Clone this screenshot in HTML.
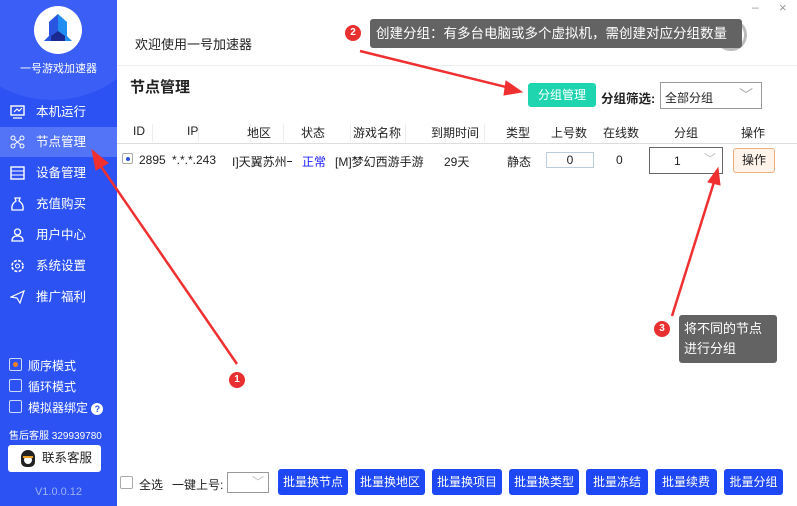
<!DOCTYPE html>
<html><head><meta charset="utf-8"><style>
*{margin:0;padding:0;box-sizing:border-box}
body{width:797px;height:506px;overflow:hidden;background:#fff;font-family:"Liberation Sans","Noto Sans CJK SC",sans-serif;font-size:12px;color:#222;position:relative}
.sb{position:absolute;left:0;top:0;width:117px;height:506px;background:#2c52f4;color:#fff;overflow:hidden}
.circ{position:absolute;left:-45px;top:-70px;width:195px;height:170px;border-radius:50%;background:#3a5ef6}
.logo{position:absolute;left:34px;top:6px;width:48px;height:48px;border-radius:50%;background:#fff}
.nav{position:absolute;left:0;width:117px;height:30px;line-height:30px;font-size:12.5px;padding-left:36px}
.nav.on{background:#5374f7}
.ic{position:absolute;left:10px;top:8px;width:15px;height:14px}
.abs{position:absolute}
.btn{position:absolute;top:469px;height:26px;background:#1e48f5;color:#fff;border-radius:3px;font-size:12px;line-height:26px;text-align:center}
.badge{position:absolute;width:16px;height:16px;border-radius:50%;background:#e83030;color:#fff;font-size:10px;line-height:16px;text-align:center;font-weight:bold}
.tip{position:absolute;background:#636363;color:#fff;border-radius:3px}
.vl{position:absolute;top:124px;width:1px;height:18px;background:#eee}
</style></head><body>
<div class="sb">
<div class="circ"></div>
<div class="logo"><svg width="48" height="48"><path d="M24 8 L33 16 L33 30 L38 35 L10 35 L15 30 L15 16 Z" fill="#1f8ef0"/><path d="M15 16 L24 8 L24 35 L10 35 L15 30Z" fill="#2a55e0"/><path d="M17 30 L24 25 L31 30 L31 35 L17 35Z" fill="#1a2a90"/></svg></div>
<div class="abs" style="left:0;top:60px;width:117px;text-align:center;font-size:11px">一号游戏加速器</div>
<div class="nav" style="top:97px"><svg class="ic" viewBox="0 0 15 14"><rect x="1" y="1" width="13" height="9" fill="none" stroke="#fff" stroke-width="1.4"/><path d="M3 13h9M4 7l3-3 2 2 3-3" stroke="#fff" fill="none" stroke-width="1.2"/></svg>本机运行</div>
<div class="nav on" style="top:127px"><svg class="ic" viewBox="0 0 15 14"><circle cx="3" cy="3" r="2" fill="none" stroke="#fff"/><circle cx="12" cy="3" r="2" fill="none" stroke="#fff"/><circle cx="3" cy="11" r="2" fill="none" stroke="#fff"/><circle cx="12" cy="11" r="2" fill="none" stroke="#fff"/><path d="M4.5 4.5l6 5M10.5 4.5l-6 5" stroke="#fff"/></svg>节点管理</div>
<div class="nav" style="top:158px"><svg class="ic" viewBox="0 0 15 14"><rect x="1" y="1" width="13" height="12" fill="none" stroke="#fff" stroke-width="1.4"/><path d="M1 5h13M1 9h13" stroke="#fff"/></svg>设备管理</div>
<div class="nav" style="top:189px"><svg class="ic" viewBox="0 0 15 14"><path d="M5 1h5l-1 3q5 3 4 9H2q-1-6 4-9z" fill="none" stroke="#fff" stroke-width="1.3"/></svg>充值购买</div>
<div class="nav" style="top:220px"><svg class="ic" viewBox="0 0 15 14"><circle cx="7.5" cy="4" r="3" fill="none" stroke="#fff" stroke-width="1.3"/><path d="M2 13q0-5 5.5-5t5.5 5z" fill="none" stroke="#fff" stroke-width="1.3"/></svg>用户中心</div>
<div class="nav" style="top:251px"><svg class="ic" viewBox="0 0 15 14"><circle cx="7.5" cy="7" r="5.5" fill="none" stroke="#fff" stroke-width="1.6" stroke-dasharray="3 1.4"/><circle cx="7.5" cy="7" r="2" fill="none" stroke="#fff"/></svg>系统设置</div>
<div class="nav" style="top:282px"><svg class="ic" viewBox="0 0 15 14"><path d="M1 7L14 1 10 13 7 8z" fill="none" stroke="#fff" stroke-width="1.2"/></svg>推广福利</div>
<div class="abs" style="left:9px;top:358px;width:13px;height:13px;border:1px solid #cfd8ff;border-radius:2px"><div style="width:5px;height:5px;border-radius:50%;background:#f08020;margin:3px"></div></div>
<div class="abs" style="left:28px;top:357px;font-size:12px">顺序模式</div>
<div class="abs" style="left:9px;top:379px;width:13px;height:13px;border:1px solid #cfd8ff;border-radius:2px"></div>
<div class="abs" style="left:28px;top:378px">循环模式</div>
<div class="abs" style="left:9px;top:400px;width:13px;height:13px;border:1px solid #cfd8ff;border-radius:2px"></div>
<div class="abs" style="left:28px;top:399px">模拟器绑定 <span style="display:inline-block;width:12px;height:12px;border-radius:50%;background:#fff;color:#2c52f4;font-size:9px;line-height:12px;text-align:center;font-weight:bold">?</span></div>
<div class="abs" style="left:9px;top:427px;font-size:10px">售后客服 329939780</div>
<div class="abs" style="left:8px;top:445px;width:93px;height:27px;background:#fff;border-radius:3px;color:#222;font-size:12.5px;line-height:27px;padding-left:34px">联系客服<span style="position:absolute;left:13px;top:5px;width:14px;height:17px;background:#222;border-radius:7px 7px 5px 5px"><span style="position:absolute;left:3px;top:6px;width:8px;height:8px;background:#fff;border-radius:50%"></span><span style="position:absolute;left:2px;top:6px;width:10px;height:2px;background:#e8a020"></span></span></div>
<div class="abs" style="left:0;top:486px;width:117px;text-align:center;color:#9fb0f5;font-size:11px">V1.0.0.12</div>
</div>

<div class="abs" style="left:135px;top:34px;font-size:13px">欢迎使用一号加速器</div>
<div class="abs" style="left:752px;top:0;color:#999;font-size:12px">–</div>
<div class="abs" style="left:779px;top:0;color:#999;font-size:13px">×</div>
<div class="abs" style="left:117px;top:65px;width:680px;height:1px;background:#eee"></div>
<div class="abs" style="left:715px;top:19px;width:32px;height:32px;border-radius:50%;border:3px solid #bbb"></div>
<div class="abs" style="left:130px;top:76px;font-size:15px;font-weight:bold">节点管理</div>
<div class="abs" style="left:528px;top:83px;width:68px;height:24px;background:#1fd5b0;color:#fff;border-radius:3px;text-align:center;line-height:24px">分组管理</div>
<div class="abs" style="left:601px;top:88px;font-weight:bold;font-size:12.5px">分组筛选:</div>
<div class="abs" style="left:660px;top:82px;width:102px;height:27px;border:1px solid #999;padding:6px 4px">全部分组<span style="position:absolute;right:8px;top:2px;color:#aaa;font-size:14px">﹀</span></div>

<div class="abs" style="left:117px;top:122px;width:680px;height:22px;border-bottom:1px solid #ddd"></div>
<div class="vl" style="left:152px"></div><div class="vl" style="left:198px"></div><div class="vl" style="left:250px"></div><div class="vl" style="left:283px"></div><div class="vl" style="left:350px"></div><div class="vl" style="left:405px"></div><div class="vl" style="left:445px"></div><div class="vl" style="left:484px"></div><div class="vl" style="left:522px"></div><div class="vl" style="left:582px"></div>
<div class="abs" style="left:117px;top:124px;width:680px;font-size:12px">
<span class="abs" style="left:16px">ID</span><span class="abs" style="left:70px">IP</span><span class="abs" style="left:130px">地区</span><span class="abs" style="left:184px">状态</span><span class="abs" style="left:236px">游戏名称</span><span class="abs" style="left:314px">到期时间</span><span class="abs" style="left:389px">类型</span><span class="abs" style="left:434px">上号数</span><span class="abs" style="left:486px">在线数</span><span class="abs" style="left:557px">分组</span><span class="abs" style="left:624px">操作</span></div>
<div class="abs" style="left:122px;top:153px;width:11px;height:11px;border:1px solid #aaa;border-radius:2px"><div style="width:4px;height:4px;border-radius:50%;background:#2c52f4;margin:3px"></div></div>
<div class="abs" style="left:117px;top:153px;width:680px;font-size:12px;white-space:nowrap">
<span class="abs" style="left:22px">2895</span><span class="abs" style="left:55px">*.*.*.243</span><span class="abs" style="left:115px;width:60px;overflow:hidden">I]天翼苏州一线</span><span class="abs" style="left:185px;color:#1a1aff">正常</span><span class="abs" style="left:218px">[M]梦幻西游手游</span><span class="abs" style="left:327px">29天</span><span class="abs" style="left:390px">静态</span><span class="abs" style="left:499px">0</span></div>
<div class="abs" style="left:546px;top:152px;width:48px;height:16px;border:1px solid #bcd;text-align:center;line-height:14px">0</div>
<div class="abs" style="left:649px;top:147px;width:74px;height:27px;border:1px solid #666;padding:6px 0 0 24px">1<span style="position:absolute;right:6px;top:2px;color:#bbb">﹀</span></div>
<div class="abs" style="left:733px;top:148px;width:42px;height:25px;border:1px solid #f0b080;background:#fff3ea;border-radius:3px;text-align:center;line-height:23px">操作</div>

<div class="abs" style="left:120px;top:476px;width:13px;height:13px;border:1px solid #aaa;border-radius:2px"></div>
<div class="abs" style="left:139px;top:476px">全选</div>
<div class="abs" style="left:172px;top:476px">一键上号:</div>
<div class="abs" style="left:227px;top:472px;width:42px;height:21px;border:1px solid #999"><span style="position:absolute;right:4px;top:0;color:#bbb">﹀</span></div>
<div class="btn" style="left:278px;width:70px">批量换节点</div>
<div class="btn" style="left:355px;width:70px">批量换地区</div>
<div class="btn" style="left:432px;width:70px">批量换项目</div>
<div class="btn" style="left:509px;width:70px">批量换类型</div>
<div class="btn" style="left:586px;width:62px">批量冻结</div>
<div class="btn" style="left:655px;width:62px">批量续费</div>
<div class="btn" style="left:724px;width:59px">批量分组</div>

<div class="tip" style="left:370px;top:19px;width:372px;height:29px;line-height:29px;padding-left:6px;font-size:13.5px">创建分组：有多台电脑或多个虚拟机，需创建对应分组数量</div>
<div class="badge" style="left:345px;top:25px">2</div>
<div class="tip" style="left:679px;top:315px;width:98px;height:48px;padding:4px 5px;font-size:13px;line-height:20px">将不同的节点进行分组</div>
<div class="badge" style="left:654px;top:321px">3</div>
<div class="badge" style="left:229px;top:372px">1</div>

<svg class="abs" style="left:0;top:0" width="797" height="506">
<g stroke="#f03030" stroke-width="2.5" fill="#f03030">
<line x1="237" y1="364" x2="100" y2="165"/><polygon points="92,150 108,163 96,170" stroke-width="1"/>
<line x1="360" y1="51" x2="510" y2="88"/><polygon points="522,92 506,81 504,95" stroke-width="1"/>
<line x1="672" y1="316" x2="714" y2="182"/><polygon points="718,168 708,182 720,185" stroke-width="1"/>
</g></svg>
</body></html>
